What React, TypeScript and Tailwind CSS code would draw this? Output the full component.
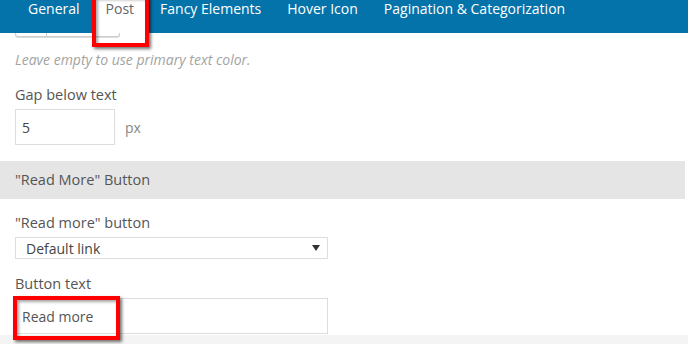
import React from 'react';

const tabs = ['General', 'Post', 'Fancy Elements', 'Hover Icon', 'Pagination & Categorization'];

const App: React.FC = () => {
  const active = 'Post';

  return (
    <div className="w-[688px] h-[344px] overflow-hidden bg-white font-['Open_Sans',sans-serif] relative">
      {/* Tab bar */}
      <div className="h-[33px] bg-[#0473aa] flex pl-[15px]">
        {tabs.map((tab) => (
          <div
            key={tab}
            className={`px-[13px] h-[33px] text-[14px] leading-[18px] pt-0 ${
              tab === active ? 'bg-white text-[#666]' : 'text-white'
            }`}
          >
            {tab}
          </div>
        ))}
      </div>

      {/* Panel */}
      <div className="w-[685px] pl-[15px]">
        {/* bottom of color picker button, cut off */}
        <div className="h-[4px] w-[105px] border-x border-b border-[#ccc] rounded-b-[3px] flex shadow-[0_1px_0_#ddd]">
          <div className="w-[31px] border-r border-[#ccc]" />
        </div>

        <p className="mt-[13px] text-[14px] leading-[20px] italic text-[#a3a3a3]">
          Leave empty to use primary text color.
        </p>

        <div className="mt-[15px] text-[14.5px] leading-[20px] text-[#555]">Gap below text</div>
        <div className="mt-[4px] flex items-center">
          <div className="w-[100px] h-[36px] border border-[#ddd] px-[6px] flex items-center text-[14px] text-[#444]">
            5
          </div>
          <span className="ml-[10px] text-[14px] text-[#888]">px</span>
        </div>
      </div>

      {/* Section header */}
      <div className="mt-[16px] w-[685px] h-[38px] bg-[#e5e5e5] pl-[15px] flex items-center text-[14.5px] leading-[20px] text-[#555]">
        "Read More" Button
      </div>

      <div className="w-[685px] pl-[15px]">
        <div className="mt-[14px] text-[14.5px] leading-[20px] text-[#555]">"Read more" button</div>
        <div className="mt-[4px] w-[313px] h-[22px] border border-[#ddd] flex items-center justify-between pl-[10px] pr-[7px] text-[14px] text-[#444]">
          <span>Default link</span>
          <svg width="8" height="6" viewBox="0 0 8 6">
            <path d="M0 0 L8 0 L4 6 Z" fill="#333" />
          </svg>
        </div>

        <div className="mt-[15px] text-[14.5px] leading-[20px] text-[#555]">Button text</div>
        <div className="mt-[4px] w-[313px] h-[36px] border border-[#ddd] px-[6px] flex items-center text-[14px] text-[#555]">
          Read more
        </div>
      </div>

      <div className="mt-[1px] h-[10px] bg-[#f4f4f4]" />

      {/* Red highlight boxes */}
      <div className="absolute left-[92px] top-[-6px] w-[57px] h-[53px] border-4 border-[#f00] shadow-[2px_2px_3px_rgba(0,0,0,0.55),inset_2px_2px_3px_rgba(0,0,0,0.35)]" />
      <div className="absolute left-[13px] top-[296px] w-[107px] h-[44px] border-4 border-[#f00] shadow-[2px_2px_3px_rgba(0,0,0,0.55),inset_2px_2px_3px_rgba(0,0,0,0.35)]" />
    </div>
  );
};

export default App;
